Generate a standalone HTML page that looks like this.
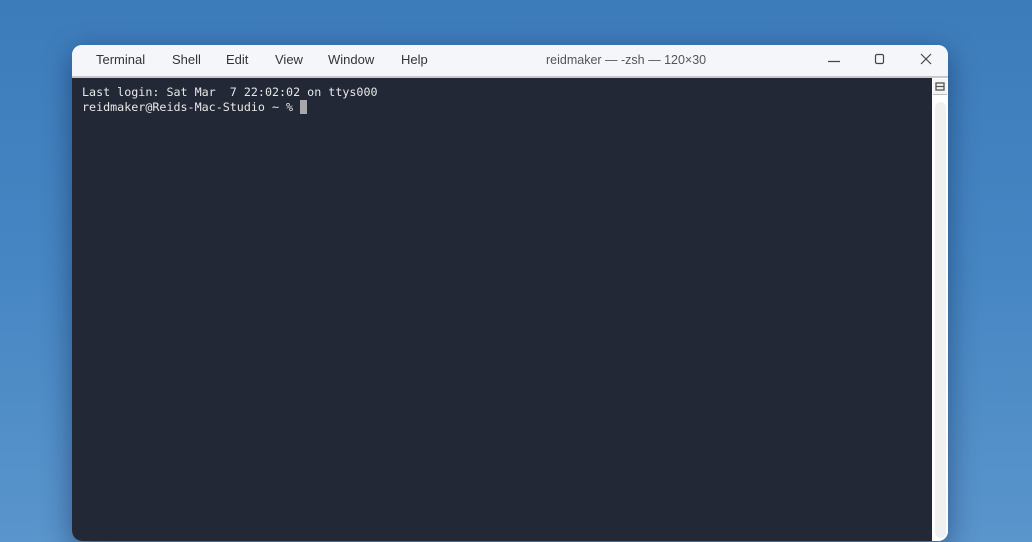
<!DOCTYPE html>
<html><head><style>
html,body{margin:0;padding:0;width:1032px;height:542px;overflow:hidden}
body{position:relative;background:linear-gradient(180deg,#3d7cbb 0%,#4686c3 50%,#5a95cc 100%);font-family:"Liberation Sans",sans-serif}
.win{position:absolute;left:72px;top:45px;width:876px;height:496px;border-radius:10px;overflow:hidden;box-shadow:0 8px 30px rgba(0,20,60,.45);background:#f5f6fa}
.tb{position:absolute;left:0;top:0;width:876px;height:31px;background:#f5f6fa;border-bottom:2px solid #c8c8cc}
.menu{position:absolute;top:7px;font-size:13px;color:#333}
.title{position:absolute;top:8px;left:474px;font-size:12.5px;color:#555}
.term{position:absolute;left:0;top:33px;width:860px;height:470px;background:#222835;color:#e8e8e8;font-family:"DejaVu Sans Mono","Liberation Mono",monospace;font-size:11.7px;line-height:15px;padding:7px 10px;box-sizing:border-box;white-space:pre}
.cur{display:inline-block;width:7px;height:14px;background:#a8a8a8;vertical-align:-3px}
.sb{position:absolute;left:860px;top:33px;width:16px;height:470px;background:#fff}
.sbb{position:absolute;left:861px;top:34px;width:14px;height:15px;border-bottom:1px solid #bbb;background:#f4f4f4}
.trk{position:absolute;left:863px;top:57px;width:11px;height:436px;background:#f0f0f0;border-radius:6px}
</style></head><body>
<div class="win">
<div class="tb">
<span class="menu" style="left:24px">Terminal</span>
<span class="menu" style="left:100px">Shell</span>
<span class="menu" style="left:154px">Edit</span>
<span class="menu" style="left:203px">View</span>
<span class="menu" style="left:256px">Window</span>
<span class="menu" style="left:329px">Help</span>
<span class="title">reidmaker — -zsh — 120×30</span>
<svg style="position:absolute;left:754px;top:8px" width="16" height="16"><path d="M2 8.5H14" stroke="#444" stroke-width="1.2"/></svg>
<svg style="position:absolute;left:800px;top:6px" width="16" height="16"><rect x="3.5" y="3.5" width="8" height="9" rx="1.5" fill="none" stroke="#444" stroke-width="1.2"/></svg>
<svg style="position:absolute;left:846px;top:6px" width="16" height="16"><path d="M3 3L13 13M13 3L3 13" stroke="#444" stroke-width="1.2"/></svg>
</div>
<div class="term">Last login: Sat Mar  7 22:02:02 on ttys000
reidmaker@Reids-Mac-Studio ~ % <span class="cur"></span></div>
<div class="sb"></div>
<div class="sbb"><svg width="14" height="15"><rect x="3" y="4" width="8" height="7" fill="none" stroke="#555" stroke-width="1.3"/><path d="M3 7.5H11" stroke="#555" stroke-width="1.3"/></svg></div>
<div class="trk"></div>
</div>
</body></html>
